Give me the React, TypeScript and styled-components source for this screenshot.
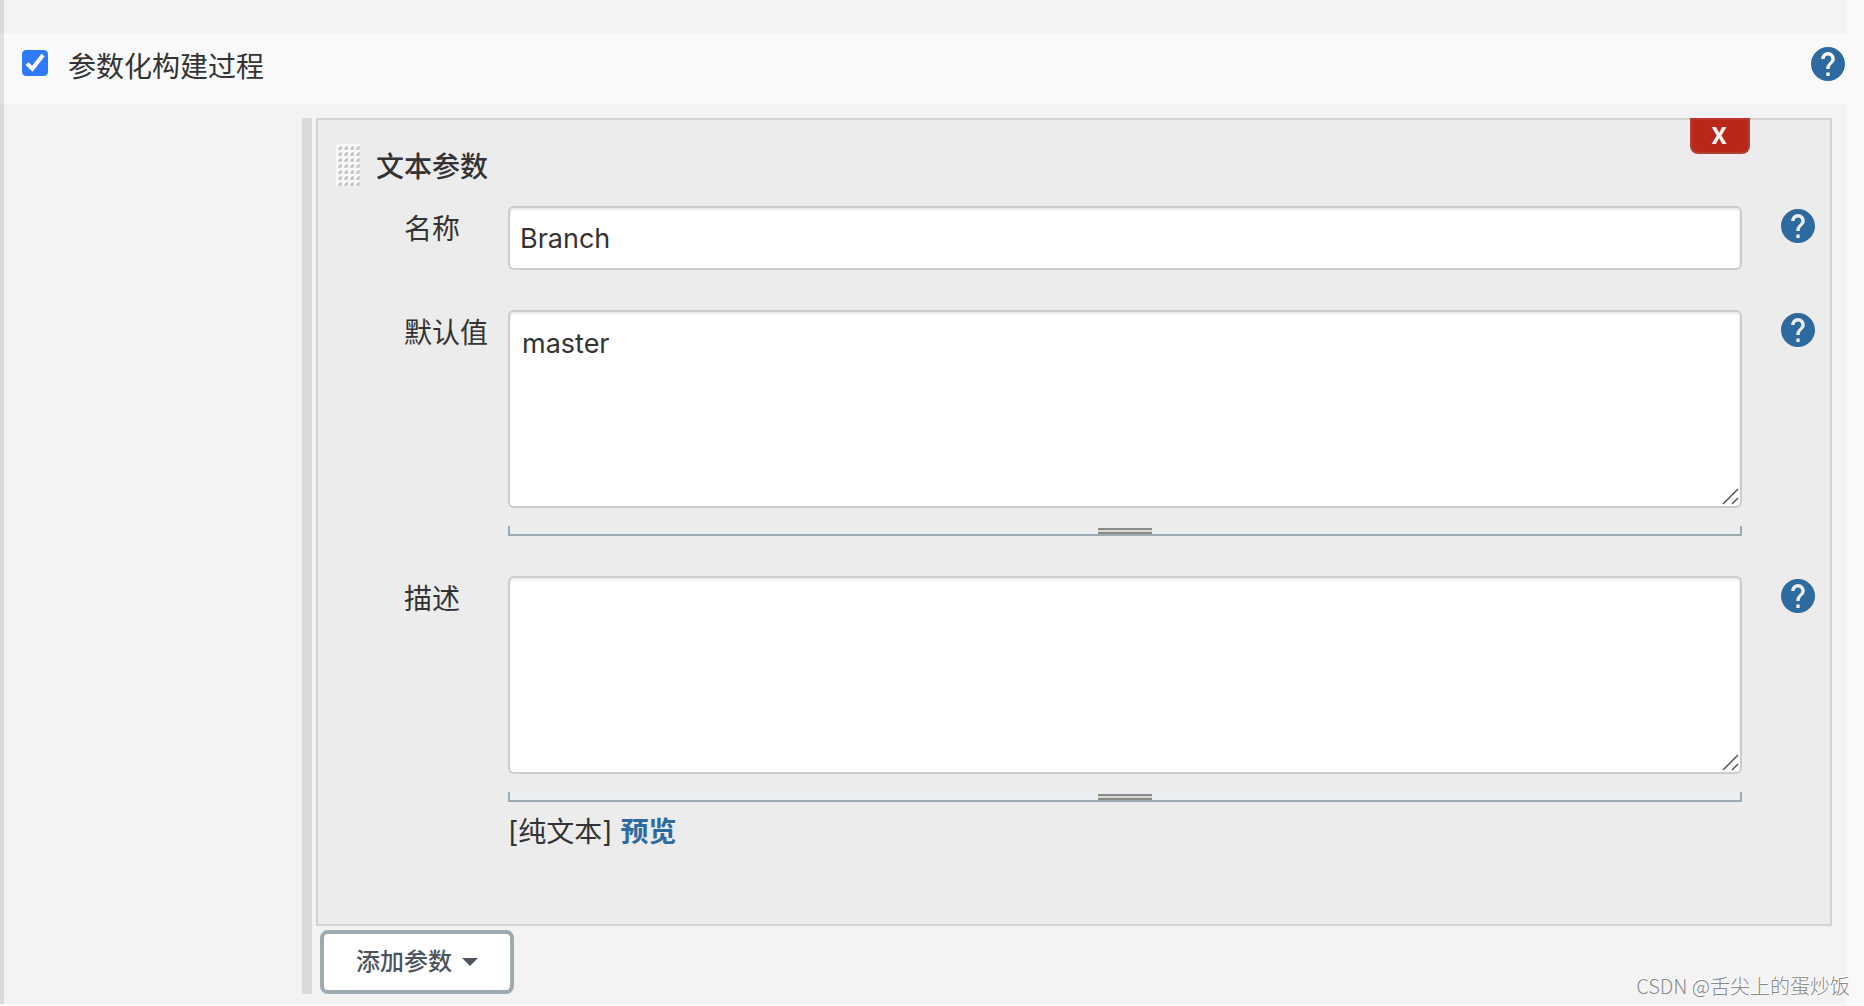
import React, { useState } from 'react';
import styled, { createGlobalStyle } from 'styled-components';

const GlobalStyle = createGlobalStyle`
  *, *::before, *::after { box-sizing: border-box; }
  body {
    margin: 0;
    background: #f9f9f9;
    color: #333;
    font: 28px/40px Inter, "Noto Sans CJK SC", sans-serif;
  }
  button, input, textarea { font: inherit; color: inherit; margin: 0; }
`;

const Page = styled.div`
  position: relative;
  display: flex;
  min-height: 100vh;
  padding: 0 18px 2px 0;
`;

const Form = styled.form`
  flex: 1;
  min-width: 0;
  padding-top: 34px;
  background: #f3f3f3;
  border-left: 4px solid #dadada;
`;

const OptionRow = styled.div`
  display: flex;
  align-items: flex-start;
  height: 70px;
  margin-left: -4px;
  padding: 13px 1px 0 18px;
  border-left: 4px solid #e0e0e0;
  background: #f9f9f9;
`;

const CheckBox = styled.span`
  display: grid;
  margin: 3px 20px 0 0;
  > * { grid-area: 1 / 1; }
  svg { pointer-events: none; }
`;

const CheckInput = styled.input`
  appearance: none;
  width: 26px;
  height: 26px;
  border: 1px solid #767676;
  border-radius: 4px;
  background: #fff;
  &:checked { background: #2f7af8; border-color: #2f7af8; }
`;

const OptionLabel = styled.label`
  flex: 1;
`;

const HelpButton = styled.button`
  display: block;
  flex: none;
  width: 34px;
  height: 34px;
  padding: 0;
  border: 0;
  background: none;
  color: #2d6a9f;
  cursor: pointer;
  svg { display: block; }
`;

const Parameters = styled.section`
  display: flex;
  flex-direction: column;
  align-items: flex-start;
  gap: 4px;
  margin: 14px 14px 10px 298px;
  padding-left: 4px;
  border-left: 10px solid #dadada;
`;

const Card = styled.div`
  position: relative;
  align-self: stretch;
  padding: 24px 15px 72px 18px;
  border: 2px solid #d3d3d3;
  background: #ececec;
`;

const TitleRow = styled.div`
  display: flex;
  align-items: center;
  gap: 16px;
  height: 42px;
  margin-bottom: 20px;
`;

const Title = styled.h2`
  margin: 0;
  padding-top: 3px;
  font-size: 28px;
  font-weight: 500;
`;

const DeleteButton = styled.button`
  position: absolute;
  top: -2px;
  right: 80px;
  width: 60px;
  height: 36px;
  padding: 0 2px 0 0;
  border: 2px solid #b04030;
  border-top-color: #b93528;
  border-radius: 0 0 8px 8px;
  background: #bb261a;
  color: #f3f3f3;
  font: 700 24px/32px Roboto, sans-serif;
  cursor: pointer;
`;

const Field = styled.div`
  display: grid;
  grid-template-columns: 104px minmax(0, 1fr) 73px;
  align-items: start;
  margin: 0 0 40px 68px;
  &:last-child { margin-bottom: 0; }
  ${HelpButton} { margin: 3px 0 0 39px; }
`;

const FieldLabel = styled.label`
  padding-top: 3px;
`;

const TextInput = styled.input`
  display: block;
  width: 100%;
  height: 64px;
  padding: 0 10px;
  border: 2px solid #ccc;
  border-radius: 6px;
  background: #fff;
  box-shadow: inset 0 2px 2px rgba(0, 0, 0, 0.075);
  font-size: 27px;
  outline: none;
`;

const TextAreaBox = styled.div`
  position: relative;
`;

const TextArea = styled.textarea`
  display: block;
  width: 100%;
  height: 198px;
  padding: 12px;
  border: 2px solid #ccc;
  border-radius: 6px;
  background: #fff;
  box-shadow: inset 0 2px 2px rgba(0, 0, 0, 0.075);
  font-size: 27px;
  resize: none;
  outline: none;
`;

const Corner = styled.svg`
  position: absolute;
  right: 3px;
  bottom: 3px;
  pointer-events: none;
`;

const ResizeBar = styled.div`
  display: flex;
  justify-content: center;
  align-items: flex-end;
  height: 10px;
  margin-top: 18px;
  border: solid #9eaab2;
  border-width: 0 2px 2px;
  background: #eaeef1;
  cursor: ns-resize;
`;

const ResizeGrip = styled.span`
  width: 54px;
  height: 6px;
  border: solid #8b8c88;
  border-width: 2px 0;
  background: #d8d8d4;
`;

const FormatLine = styled.div`
  display: flex;
  gap: 8px;
  padding-top: 10px;
`;

const PreviewLink = styled.a`
  color: #2d6a9f;
  font-weight: 700;
  text-decoration: none;
`;

const AddButton = styled.button`
  display: flex;
  align-items: center;
  gap: 10px;
  height: 64px;
  margin-left: 4px;
  padding: 0 32px;
  border: 4px solid #9eaab2;
  border-radius: 8px;
  background: #fff;
  color: #4d545d;
  font-size: 24px;
  font-weight: 500;
  cursor: pointer;
`;

const Watermark = styled.div`
  position: absolute;
  right: 14px;
  bottom: 6px;
  color: #888;
  font: 20px/28px "Noto Sans CJK SC", sans-serif;
  font-weight: 300;
  text-shadow: -1px -1px 0 #fff;
`;

function Help({ label }: { label: string }) {
  return (
    <HelpButton type="button" aria-label={label}>
      <svg width="34" height="34" viewBox="2 2 20 20" fill="currentColor">
        <path d="M12 2C6.48 2 2 6.48 2 12s4.48 10 10 10 10-4.48 10-10S17.52 2 12 2zm1 17h-2v-2h2v2zm2.07-7.75l-.9.92C13.45 12.9 13 13.5 13 15h-2v-.5c0-1.1.45-2.1 1.17-2.83l1.24-1.26c.37-.36.59-.86.59-1.41 0-1.1-.9-2-2-2s-2 .9-2 2H8c0-2.21 1.79-4 4-4s4 1.79 4 4c0 .88-.36 1.68-.93 2.25z" />
      </svg>
    </HelpButton>
  );
}

function DragGrip() {
  return (
    <svg width="24" height="42" viewBox="0 0 24 42" aria-hidden="true">
      <defs>
        <pattern id="grip" width="6" height="6" patternUnits="userSpaceOnUse">
          <rect width="6" height="6" fill="#f7f7f5" />
          <path d="M6 2v4H2V4h2V2z" fill="#d2d2d0" />
          <rect x="3" y="3" width="2" height="2" fill="#c2c2c0" />
        </pattern>
      </defs>
      <rect width="24" height="42" fill="url(#grip)" />
    </svg>
  );
}

function ResizableText({ id, initial }: { id: string; initial: string }) {
  return (
    <>
      <TextAreaBox>
        <TextArea id={id} defaultValue={initial} spellCheck={false} />
        <Corner width="17" height="17" viewBox="0 0 17 17" stroke="#555" strokeWidth="1.5">
          <path d="M1 16L16 1M10 16L16 10" />
        </Corner>
      </TextAreaBox>
      <ResizeBar>
        <ResizeGrip />
      </ResizeBar>
    </>
  );
}

export default function App() {
  const [enabled, setEnabled] = useState(true);
  return (
    <>
      <GlobalStyle />
      <Page lang="zh-CN">
        <Form onSubmit={(e) => e.preventDefault()}>
          <OptionRow>
            <CheckBox>
              <CheckInput
                id="parameterized"
                type="checkbox"
                checked={enabled}
                onChange={(e) => setEnabled(e.target.checked)}
              />
              {enabled && (
                <svg width="26" height="26" viewBox="0 0 26 26" fill="none" stroke="#fff" strokeWidth="4">
                  <path d="M5 13.6L10.4 18.8L21 5" />
                </svg>
              )}
            </CheckBox>
            <OptionLabel htmlFor="parameterized">参数化构建过程</OptionLabel>
            <Help label="帮助：参数化构建过程" />
          </OptionRow>
          <Parameters>
            <Card>
              <DeleteButton type="button">X</DeleteButton>
              <TitleRow>
                <DragGrip />
                <Title>文本参数</Title>
              </TitleRow>
              <Field>
                <FieldLabel htmlFor="name">名称</FieldLabel>
                <TextInput id="name" type="text" defaultValue="Branch" spellCheck={false} />
                <Help label="帮助：名称" />
              </Field>
              <Field>
                <FieldLabel htmlFor="default">默认值</FieldLabel>
                <div>
                  <ResizableText id="default" initial="master" />
                </div>
                <Help label="帮助：默认值" />
              </Field>
              <Field>
                <FieldLabel htmlFor="description">描述</FieldLabel>
                <div>
                  <ResizableText id="description" initial="" />
                  <FormatLine>
                    <span>[纯文本]</span>
                    <PreviewLink href="#preview">预览</PreviewLink>
                  </FormatLine>
                </div>
                <Help label="帮助：描述" />
              </Field>
            </Card>
            <AddButton type="button">
              添加参数
              <svg width="16" height="8" viewBox="0 0 16 8" fill="currentColor" aria-hidden="true">
                <path d="M0 0h16L8 8z" />
              </svg>
            </AddButton>
          </Parameters>
        </Form>
        <Watermark>CSDN @舌尖上的蛋炒饭</Watermark>
      </Page>
    </>
  );
}
